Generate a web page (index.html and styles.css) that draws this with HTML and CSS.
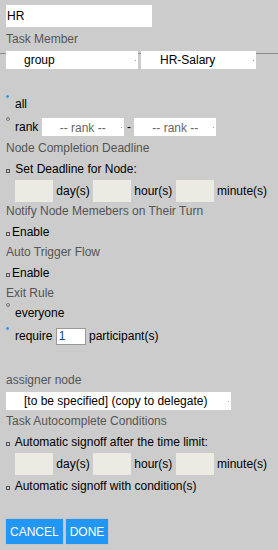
FILE: index.html
```html
<!DOCTYPE html>
<html>
<head>
<meta charset="utf-8">
<link rel="stylesheet" href="styles.css">
</head>
<body>
<div class="form">
  <input class="name-input" type="text" value="HR">
  <div class="label l-member">Task Member</div>
  <div class="sel-row">
    <select class="sel sel-group"><option>group</option></select>
    <select class="sel sel-salary"><option>HR-Salary</option></select>
  </div>

  <div class="radio-row r-all"><span class="radio checked"></span><span class="rtext">all</span></div>
  <div class="radio-row r-rank"><span class="radio"></span><span class="rtext">rank <select class="sel sel-rank"><option>-- rank --</option></select> - <select class="sel sel-rank"><option>-- rank --</option></select></span></div>

  <div class="label l-ncd">Node Completion Deadline</div>
  <div class="text l-setdl"><span class="check spaced"></span> Set Deadline for Node:</div>
  <div class="time-row t1"><input class="time" type="text" disabled> day(s) <input class="time" type="text" disabled> hour(s) <input class="time" type="text" disabled> minute(s)</div>

  <div class="label l-notify">Notify Node Memebers on Their Turn</div>
  <div class="text l-en1"><span class="check tight"></span>Enable</div>
  <div class="label l-auto">Auto Trigger Flow</div>
  <div class="text l-en2"><span class="check tight"></span>Enable</div>
  <div class="label l-exit">Exit Rule</div>
  <div class="radio-row r-every"><span class="radio"></span><span class="rtext">everyone</span></div>
  <div class="radio-row r-req"><span class="radio checked"></span><span class="rtext req">require <input class="num" type="text" value="1"> participant(s)</span></div>

  <div class="label l-assigner">assigner node</div>
  <select class="sel sel-assigner"><option>[to be specified] (copy to delegate)</option></select>

  <div class="label l-tac">Task Autocomplete Conditions</div>
  <div class="text l-sig1"><span class="check spaced"></span> Automatic signoff after the time limit:</div>
  <div class="time-row t2"><input class="time" type="text" disabled> day(s) <input class="time" type="text" disabled> hour(s) <input class="time" type="text" disabled> minute(s)</div>
  <div class="text l-sig2"><span class="check spaced"></span> Automatic signoff with condition(s)</div>

  <div class="buttons">
    <button class="btn">CANCEL</button>
    <button class="btn">DONE</button>
  </div>
</div>
</body>
</html>
```

FILE: styles.css
```css
html, body {
  margin: 0;
  padding: 0;
  background: #cccccc;
}
body {
  width: 278px;
  height: 550px;
  overflow: hidden;
  font-family: "Liberation Sans", Arial, sans-serif;
  font-size: 12px;
  color: #000;
}
.form {
  padding: 5px 6px 0 6px;
  display: flex;
  flex-direction: column;
  align-items: flex-start;
}
.name-input {
  display: block;
  box-sizing: border-box;
  width: 146px;
  height: 22px;
  border: none;
  margin: 0;
  padding: 0 0 0 1px;
  background: #fff;
  font: inherit;
  color: #000;
  outline: none;
}
.label {
  color: #555;
  line-height: 16px;
  height: 16px;
  white-space: nowrap;
}
.text {
  line-height: 16px;
  height: 16px;
  white-space: nowrap;
}
.l-member { margin-top: 4px; }
.sel-row {
  position: relative;
  display: flex;
  gap: 3px;
  margin-top: 4px;
  height: 18px;
}
.sel-row::before {
  content: "";
  position: absolute;
  left: -6px;
  width: 278px;
  top: 2px;
  height: 1px;
  background: #8c8c8c;
}
.sel {
  position: relative;
  -webkit-appearance: none;
  appearance: none;
  box-sizing: border-box;
  height: 18px;
  border: none;
  border-radius: 0;
  margin: 0;
  padding: 0 0 0 18px;
  font: inherit;
  color: #000;
  outline: none;
  background: #fff linear-gradient(#999, #999) no-repeat right 2px center / 1px 1px;
}
.sel-group { width: 132px; }
.sel-salary { width: 115px; padding-left: 19px; }
.sel-rank { width: 82px; color: #666; vertical-align: middle; }
.sel-assigner { width: 225px; margin-top: 4px; }

.radio-row {
  display: flex;
  align-items: flex-start;
  white-space: nowrap;
}
.radio {
  box-sizing: border-box;
  width: 4px;
  height: 4px;
  border: 1px solid #777;
  border-radius: 50%;
  margin-right: 5px;
  flex: none;
}
.radio.checked {
  border-color: #2196f3;
  background: #2196f3;
  width: 3px;
  height: 3px;
  margin-right: 6px;
}
.rtext {
  line-height: 20px;
}
.r-all { margin-top: 25px; height: 20px; }
.r-all .radio { margin-top: 1px; }
.r-rank { margin-top: 3px; height: 20px; }
.r-rank .rtext { display: flex; align-items: center; height: 20px; white-space: pre; }
.r-every { margin-top: 2px; height: 20px; }
.r-req { margin-top: 4px; height: 18px; }
.r-req .rtext { display: flex; align-items: center; height: 18px; white-space: pre; line-height: 18px; }
.num {
  box-sizing: border-box;
  width: 30px;
  height: 17px;
  border: 1px solid #999;
  margin: 0;
  padding: 0 0 0 2px;
  background: #fff;
  font: inherit;
  color: #1a3d8f;
  outline: none;
}

.check {
  display: inline-block;
  box-sizing: border-box;
  width: 4px;
  height: 4px;
  border: 1px solid #555;
  vertical-align: baseline;
}
.check.tight { margin-right: 2px; }
.check.spaced { margin-right: 2px; }

.l-ncd { margin-top: 3px; }
.l-setdl { margin-top: 5px; }
.time-row {
  margin-top: 3px;
  padding-left: 9px;
  height: 22px;
  line-height: 22px;
  white-space: nowrap;
  display: block;
}
.time {
  box-sizing: border-box;
  width: 38px;
  height: 22px;
  border: none;
  margin: 0;
  padding: 0;
  background: #ebebe4;
  vertical-align: top;
  font: inherit;
}
.l-notify { margin-top: 1px; }
.l-en1 { margin-top: 5px; }
.l-auto { margin-top: 4px; }
.l-en2 { margin-top: 5px; }
.l-exit { margin-top: 4px; }
.l-assigner { margin-top: 27px; }
.l-tac { margin-top: 3px; }
.l-sig1 { margin-top: 5px; }
.l-sig2 { margin-top: 3px; }

.buttons {
  display: flex;
  gap: 3px;
  margin-top: 25px;
}
.btn {
  box-sizing: border-box;
  height: 25px;
  padding: 0 4px;
  border: none;
  border-radius: 0;
  margin: 0;
  background: #2196f3;
  color: #fff;
  font: inherit;
  font-size: 12px;
  box-shadow: 0 0 1px rgba(0,0,0,0.2);
}
```
